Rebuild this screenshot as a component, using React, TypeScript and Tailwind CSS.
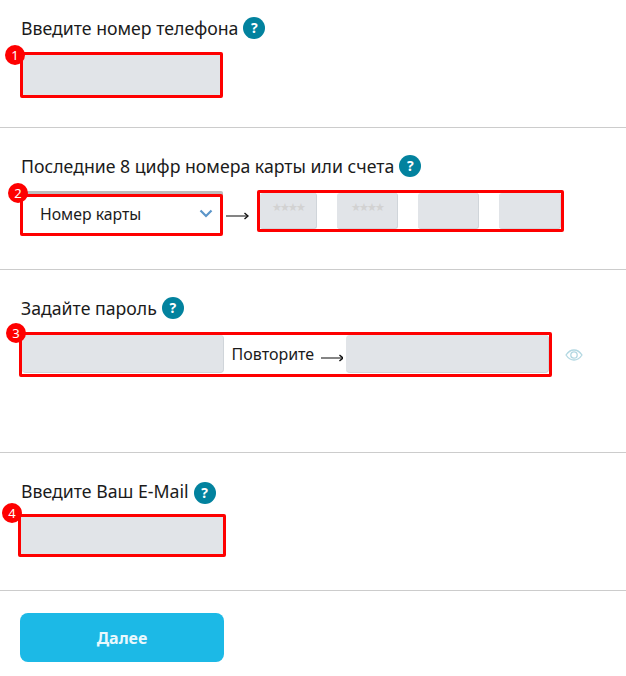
import React from "react"

const Help = ({ className = "" }: { className?: string }) => (
  <span
    className={`flex h-[22px] w-[22px] shrink-0 items-center justify-center rounded-full bg-[#02829e] text-[14px] font-bold leading-none text-white ${className}`}
  >
    ?
  </span>
)

const Badge = ({ n, className }: { n: number; className: string }) => (
  <span
    className={`absolute flex h-5 w-5 items-center justify-center rounded-full bg-[#fe0000] text-[13px] leading-none text-white ${className}`}
  >
    {n}
  </span>
)

const Label = ({ text, helpClass, className }: { text: string; helpClass?: string; className: string }) => (
  <div className={`flex h-[24px] items-center gap-[5px] text-[17.7px] text-[#1b1b1b] ${className}`}>
    <span>{text}</span>
    <Help className={helpClass} />
  </div>
)

const Arrow = ({ className }: { className: string }) => (
  <svg width="23" height="8" viewBox="0 0 23 8" className={className}>
    <path d="M0 4H21" stroke="#777" strokeWidth="1.8" />
    <path d="M18.500 1l3.500 3-3.500 3" stroke="#111" strokeWidth="1.400" fill="none" />
  </svg>
)

const Field = ({ stars, className }: { stars?: boolean; className: string }) => (
  <div
    className={`flex h-9 justify-center rounded-[3px] border-r border-b border-[#d0d5da] bg-[#e1e4e8] pt-[8px] text-[11px] leading-[12px] tracking-[-2px] text-[#d2d2d2] ${className}`}
  >
    {stars ? "★★★★" : ""}
  </div>
)

const App = () => {
  return (
    <div className="h-[676px] w-[626px] overflow-hidden bg-white font-['Noto_Sans',sans-serif]">
      <section className="h-[128px] border-b border-[#cccccc] pt-[16px]">
        <Label text="Введите номер телефона" className="ml-[21px]" />
        <div className="relative ml-[20px] mt-[12px] h-[46px] w-[203px] rounded-[2px] border-[3px] border-[#fe0000] bg-[#e1e4e8]">
          <Badge n={1} className="-left-[18px] -top-[10px]" />
        </div>
      </section>

      <section className="h-[142px] border-b border-[#cccccc] pt-[26px]">
        <Label text="Последние 8 цифр номера карты или счета" className="ml-[21px]" />
        <div className="ml-[20px] mt-[12px] flex items-start">
          <div className="relative mt-[4px] flex h-[42px] w-[203px] items-center justify-between rounded-[2px] border-[3px] border-[#fe0000] bg-white pl-[17px] pr-[7px] text-[15.8px] text-[#1b1b1b] shadow-[0_-3px_0_#bdbdbd]">
            <Badge n={2} className="-left-[15px] -top-[14px]" />
            <span>Номер карты</span>
            <svg width="14" height="9" viewBox="0 0 14 9" className="mb-[4px]">
              <path d="M1.5 1.5L7 7l5.500-5.500" stroke="#5b95c9" strokeWidth="2.200" fill="none" />
            </svg>
          </div>
          <Arrow className="ml-[3px] mt-[22px]" />
          <div className="ml-[8px] flex h-[42px] w-[307px] justify-between rounded-[2px] border-[3px] border-[#fe0000]">
            <Field stars className="w-[57px]" />
            <Field stars className="ml-[20px] w-[61px]" />
            <Field className="ml-[20px] w-[61px]" />
            <Field className="ml-[20px] w-[62px]" />
          </div>
        </div>
      </section>

      <section className="h-[183px] border-b border-[#cccccc] pt-[26px]">
        <Label text="Задайте пароль" className="ml-[21px]" />
        <div className="ml-[19px] mt-[12px] flex items-center">
          <div className="relative flex h-[45px] w-[533px] items-start rounded-[2px] border-[3px] border-[#fe0000]">
            <Badge n={3} className="-left-[16px] -top-[12px]" />
            <Field className="h-[38px] w-[202px] rounded-[4px]" />
            <span className="ml-[8px] mt-[7px] w-[82px] text-[16px] text-[#1b1b1b]">Повторите</span>
            <Arrow className="ml-[7px] mt-[19px]" />
            <Field className="ml-[3px] h-[38px] w-[203px] rounded-[4px]" />
          </div>
          <svg width="18" height="12" viewBox="0 0 18 12" className="ml-[13px]" fill="none" stroke="#b3d8e2" strokeWidth="1.300">
            <path d="M1 6c2-3 5-5 8-5s6 2 8 5c-2 3-5 5-8 5s-6-2-8-5z" />
            <circle cx="9" cy="6" r="3.200" />
          </svg>
        </div>
      </section>

      <section className="h-[138px] border-b border-[#cccccc] pt-[26px]">
        <Label text="Введите Ваш E-Mail" helpClass="mt-[4px]" className="ml-[21px]" />
        <div className="relative ml-[18px] mt-[11px] h-[43px] w-[208px] rounded-[2px] border-[3px] border-[#fe0000] bg-[#e1e4e8]">
          <Badge n={4} className="-left-[19px] -top-[14px]" />
        </div>
      </section>

      <div className="pl-[20px] pt-[22px]">
        <button className="h-[49px] w-[204px] rounded-[8px] bg-[#1cb9e6] text-[16px] font-bold text-[#e8f8fd]">
          Далее
        </button>
      </div>
    </div>
  )
}

export default App
